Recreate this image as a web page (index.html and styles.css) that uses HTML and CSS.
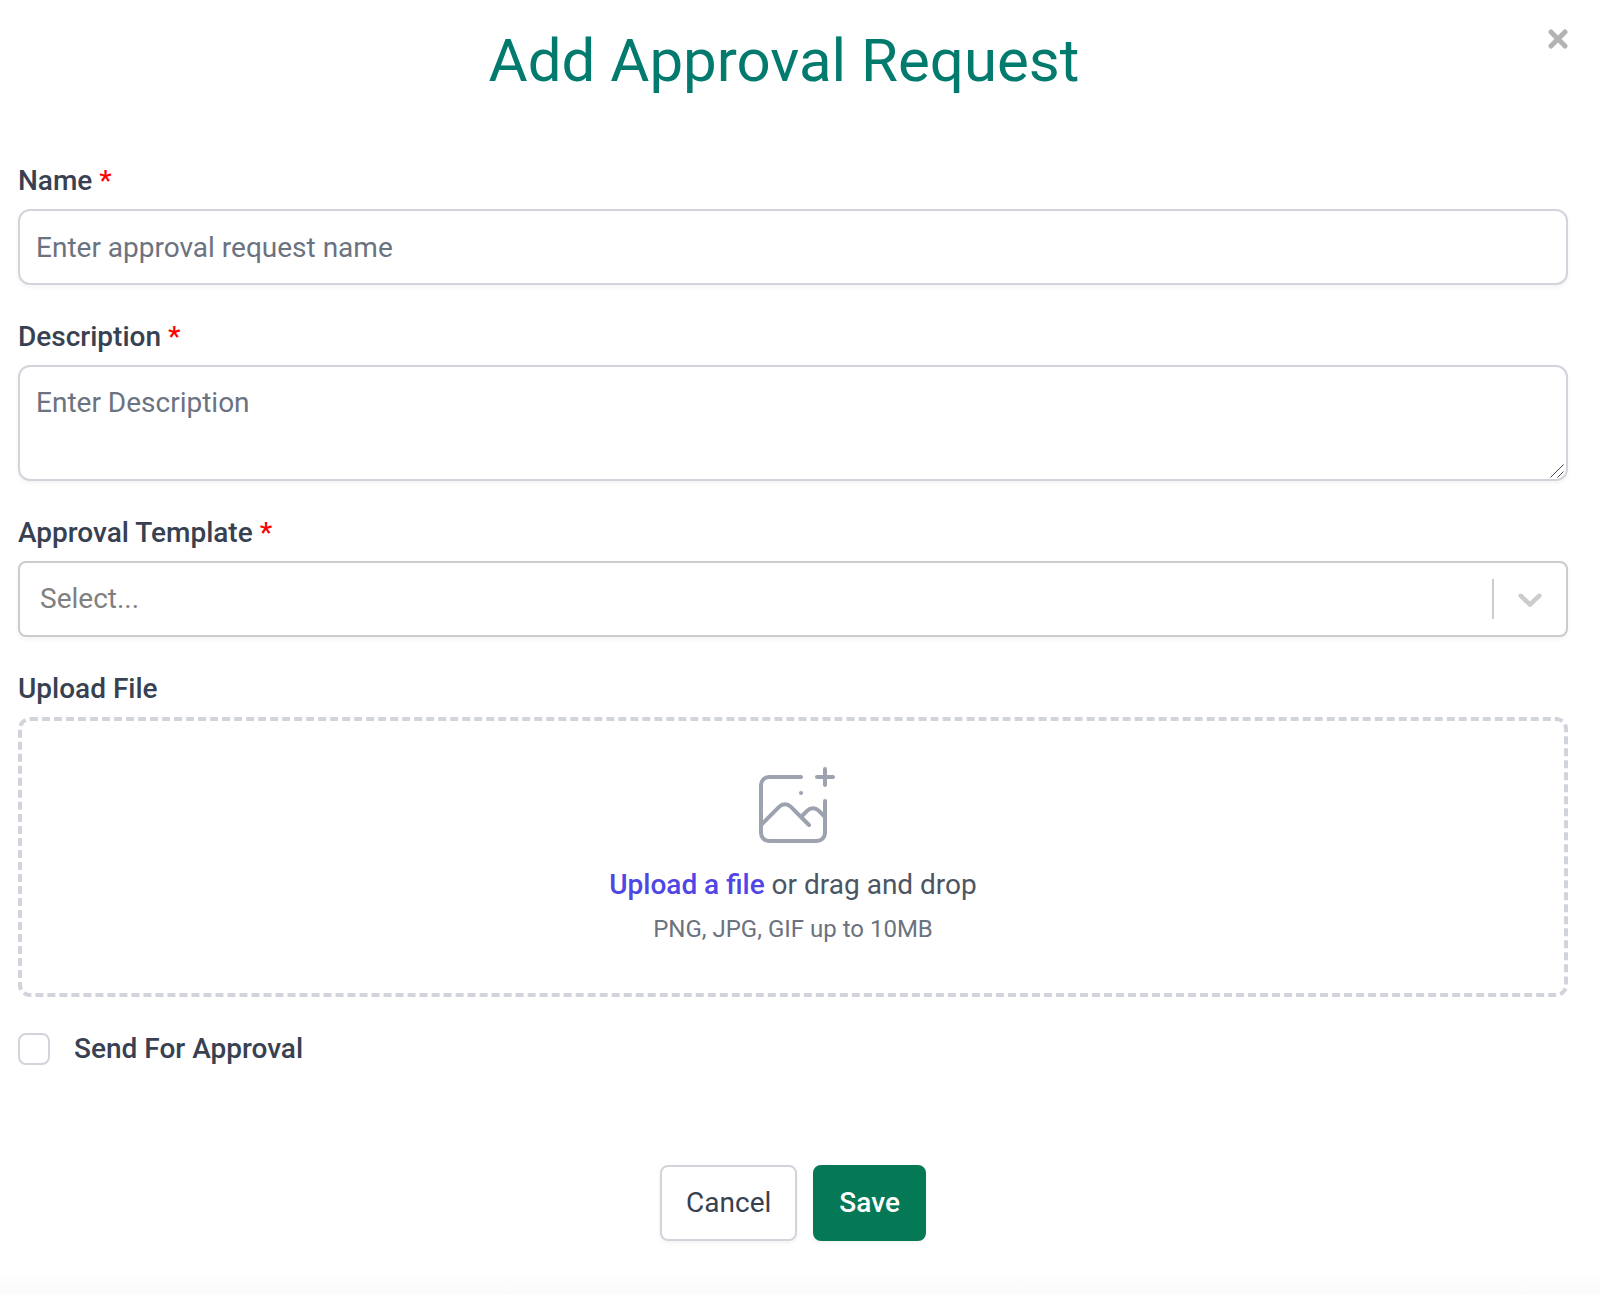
FILE: index.html
```
<!DOCTYPE html>
<html lang="en">
<head>
    <meta charset="UTF-8">
    <meta name="viewport" content="width=device-width, initial-scale=1.0">
    <title>Add Approval Request</title>
    <link rel="stylesheet" href="styles.css">
</head>
<body>
    <div class="modal">
        <header class="modal-header">
            <h1>Add Approval Request</h1>
            <button type="button" class="close" aria-label="Close">
                <svg viewBox="0 0 20 20" aria-hidden="true"><path d="M3 3l14 14M17 3L3 17"/></svg>
            </button>
        </header>

        <form class="form">
            <div class="field">
                <label class="label" for="name">Name <span class="required">*</span></label>
                <input type="text" id="name" class="control" placeholder="Enter approval request name">
            </div>

            <div class="field">
                <label class="label" for="description">Description <span class="required">*</span></label>
                <div class="control-wrap">
                    <textarea id="description" class="control" placeholder="Enter Description"></textarea>
                    <svg class="grip" viewBox="0 0 14 14" aria-hidden="true"><path d="M0.500 13.500l13-13M7.500 13.500l6-6"/></svg>
                </div>
            </div>

            <div class="field">
                <label class="label" for="template">Approval Template <span class="required">*</span></label>
                <div class="control-wrap">
                    <select id="template" class="control select">
                        <option value="">Select...</option>
                    </select>
                    <span class="indicator">
                        <svg viewBox="0 0 20 20" aria-hidden="true"><path d="M4.516 7.548c0.436-0.446 1.043-0.481 1.576 0l3.908 3.747 3.908-3.747c0.533-0.481 1.141-0.446 1.574 0 0.436 0.445 0.408 1.197 0 1.615-0.406 0.418-4.695 4.502-4.695 4.502-0.217 0.223-0.502 0.335-0.787 0.335s-0.57-0.112-0.789-0.335c0 0-4.287-4.084-4.695-4.502s-0.436-1.17 0-1.615z"/></svg>
                    </span>
                </div>
            </div>

            <div class="field">
                <label class="label" for="file">Upload File</label>
                <div class="dropzone">
                    <svg class="upload-icon" viewBox="0 0 48 48" aria-hidden="true"><path d="M28 8H12a4 4 0 00-4 4v20m32-12v8m0 0v8a4 4 0 01-4 4H12a4 4 0 01-4-4v-4m32-4l-3.172-3.172a4 4 0 00-5.656 0L28 28M8 32l9.172-9.172a4 4 0 015.656 0L28 28m0 0l4 4m4-24h8m-4-4v8m-12 4h.02"/></svg>
                    <p class="upload-text"><label class="upload-link" for="file">Upload a file</label> or drag and drop</p>
                    <input type="file" id="file" class="file-input" accept="image/png,image/jpeg,image/gif">
                    <p class="hint">PNG, JPG, GIF up to 10MB</p>
                </div>
            </div>

            <div class="check">
                <input type="checkbox" id="send" class="checkbox">
                <label for="send">Send For Approval</label>
            </div>

            <div class="actions">
                <button type="button" class="btn">Cancel</button>
                <button type="submit" class="btn btn-save">Save</button>
            </div>
        </form>
    </div>
</body>
</html>
```
FILE: styles.css
```
* {
    box-sizing: border-box;
}

body {
    margin: 0;
    font-family: Roboto, sans-serif;
    font-size: 28px;
    line-height: 40px;
    color: #374151;
    background: #fff;
}

.modal {
    position: relative;
    min-height: 100vh;
    padding: 21px 32px 52px 0;
    background: linear-gradient(to top, #fafafa, #fff 24px);
}

.modal-header {
    margin-bottom: 60px;
    text-align: center;
}

h1 {
    margin: 0;
    font-size: 60px;
    font-weight: 400;
    line-height: 80px;
    color: #037a6e;
}

.close {
    position: absolute;
    top: 29px;
    right: 32px;
    width: 20px;
    height: 20px;
    padding: 0;
    border: none;
    background: none;
    cursor: pointer;
}

.close svg {
    display: block;
    fill: none;
    stroke: #b3b3b3;
    stroke-width: 5;
    stroke-linecap: round;
}

.form {
    padding-left: 18px;
}

.field {
    margin-bottom: 32px;
}

.label {
    display: block;
    margin-bottom: 8px;
    font-weight: 500;
}

.required {
    color: #f00;
}

.control {
    display: block;
    width: 100%;
    height: 76px;
    padding: 16px;
    border: 2px solid #d1d5db;
    border-radius: 12px;
    font: inherit;
    color: #374151;
    background: #fff;
    box-shadow: 0 2px 4px rgba(0, 0, 0, 0.05);
}

.control::placeholder {
    color: #6b7280;
    opacity: 1;
}

.control-wrap {
    position: relative;
}

textarea.control {
    height: 116px;
    resize: vertical;
}

textarea.control::-webkit-resizer {
    background: transparent;
}

.grip {
    position: absolute;
    right: 4px;
    bottom: 3px;
    width: 14px;
    height: 14px;
    fill: none;
    stroke: #4a4a4a;
    stroke-width: 1;
    pointer-events: none;
}

.select {
    appearance: none;
    padding: 0 92px 0 20px;
    border-color: #ccc;
    border-radius: 8px;
    color: #808080;
}

.indicator {
    position: absolute;
    top: 18px;
    right: 2px;
    width: 74px;
    height: 40px;
    padding-left: 16px;
    border-left: 2px solid #ccc;
    pointer-events: none;
}

.indicator svg {
    display: block;
    width: 40px;
    height: 40px;
    fill: #ccc;
}

.dropzone {
    display: flex;
    flex-direction: column;
    align-items: center;
    gap: 8px;
    padding: 40px 48px 48px;
    border: 4px dashed #d1d5db;
    border-radius: 12px;
}

.upload-icon {
    width: 96px;
    height: 96px;
    fill: none;
    stroke: #9ca3af;
    stroke-width: 2;
    stroke-linecap: round;
    stroke-linejoin: round;
}

.upload-text,
.hint {
    margin: 0;
}

.upload-text {
    color: #4b5563;
}

.upload-link {
    font-weight: 500;
    color: #4f46e5;
    cursor: pointer;
}

.file-input {
    display: none;
}

.hint {
    font-size: 24px;
    line-height: 32px;
    color: #6b7280;
}

.check {
    display: flex;
    align-items: center;
    gap: 24px;
    font-weight: 500;
}

.checkbox {
    appearance: none;
    width: 32px;
    height: 32px;
    margin: 0;
    border: 2px solid #d1d5db;
    border-radius: 8px;
    background: #fff;
}

.checkbox:checked {
    background: #057955;
}

.actions {
    display: flex;
    justify-content: center;
    gap: 16px;
    margin-top: 96px;
}

.btn {
    height: 76px;
    padding: 0 24px;
    border: 2px solid #d1d5db;
    border-radius: 8px;
    font: inherit;
    color: #374151;
    background: #fff;
    box-shadow: 0 2px 4px rgba(0, 0, 0, 0.05);
    cursor: pointer;
}

.btn-save {
    border-color: #057955;
    font-weight: 500;
    color: #fff;
    background: #057955;
}
```
